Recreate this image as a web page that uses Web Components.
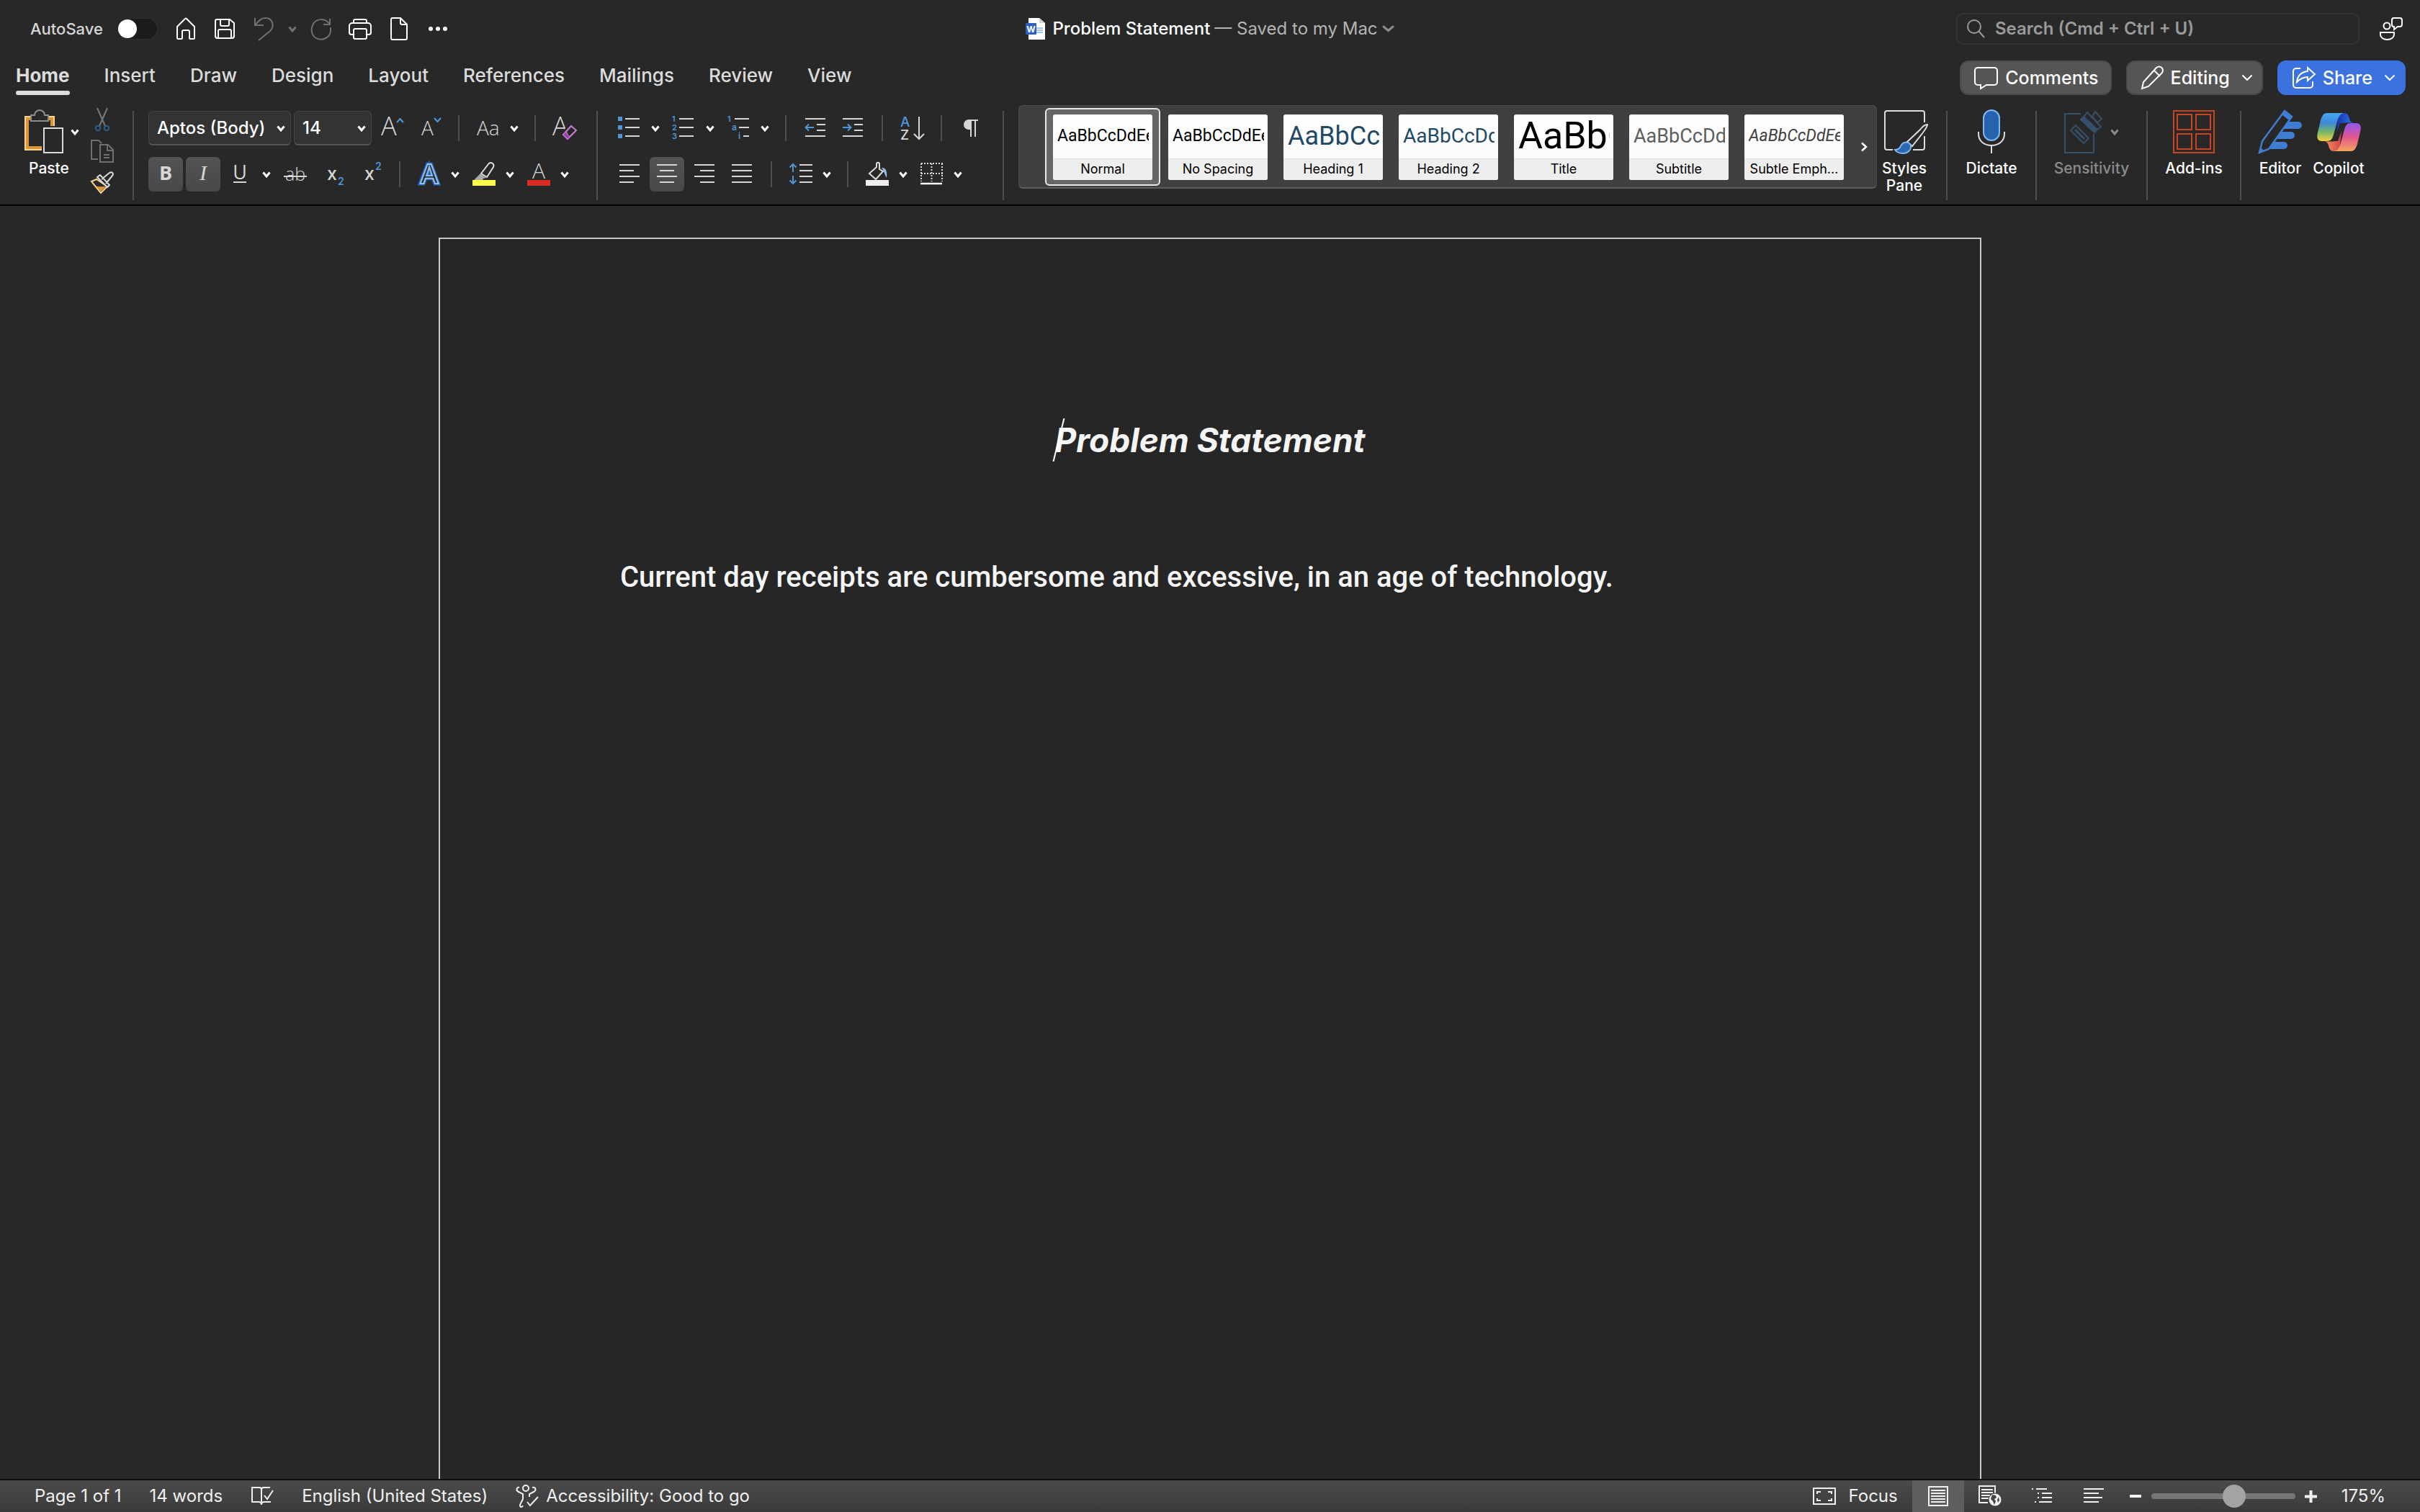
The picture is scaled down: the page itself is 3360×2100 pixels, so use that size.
<!DOCTYPE html>
<html lang="en">
<head>
<meta charset="utf-8">
<title>Problem Statement</title>
<style>
html,body{margin:0;height:100%;background:#282828}
body{font-family:Inter,"Liberation Sans",sans-serif;color:#e0e0e0;overflow:hidden}
</style>
</head>
<body>
<word-app></word-app>

<template id="t-app">
<style>
:host{display:flex;flex-direction:column;height:100vh;background:#282828}
document-canvas{flex:1;min-height:0}
</style>
<title-bar></title-bar>
<tab-strip></tab-strip>
<ribbon-bar></ribbon-bar>
<document-canvas>
  <document-heading slot="heading">Problem Statement</document-heading>
  <span slot="body">Current day receipts are cumbersome and excessive, in an age of technology.</span>
</document-canvas>
<status-bar></status-bar>
</template>

<template id="t-title">
<style>
:host{display:grid;grid-template-columns:1fr auto 1fr;align-items:center;height:80px}
button{all:unset;display:flex;align-items:center;justify-content:center;width:54px;height:44px;color:#fff}
button:disabled{color:#717171}
button.narrow{width:26px}
.left{display:flex;align-items:center;padding-left:42px}
label{font-size:22px;font-weight:500;line-height:28px;color:#d6d6d6;margin-right:20px}
.switch{appearance:none;margin:0 12px 0 0;width:56px;height:30px;border-radius:15px;background:#1b1b1b;border:1px solid #303030;box-sizing:border-box;display:flex;align-items:center}
.switch::before{content:"";width:26px;height:26px;border-radius:13px;background:#fff}
.doc{display:flex;align-items:center;font-size:24px;line-height:30px;font-weight:500;color:#fff}
.doc ui-icon:first-child{margin-right:10px}
.doc span{font-weight:400;color:#b4b4b4;margin:0 6px}
.right{display:flex;align-items:center;justify-content:flex-end;gap:28px;padding-right:24px}
.right button{width:32px}
.search{display:flex;align-items:center;gap:14px;width:560px;height:44px;box-sizing:border-box;border:2px solid #343434;border-radius:10px;padding:0 12px;color:#9a9a9a}
input[type=search]{appearance:none;flex:1;min-width:0;background:none;border:0;outline:0;padding:0;margin:0;font:600 24px/30px Inter,"Liberation Sans",sans-serif;color:#fff}
input::placeholder{color:#9a9a9a;opacity:1}
</style>
<div class="left">
<label for="as">AutoSave</label><input id="as" class="switch" type="checkbox" role="switch">
<button aria-label="Home"><ui-icon name="home"></ui-icon></button>
<button aria-label="Save"><ui-icon name="save"></ui-icon></button>
<button disabled aria-label="Undo"><ui-icon name="undo"></ui-icon></button>
<button disabled class="narrow" aria-label="Undo history"><ui-icon name="chev"></ui-icon></button>
<button disabled aria-label="Repeat"><ui-icon name="redo"></ui-icon></button>
<button aria-label="Print"><ui-icon name="print"></ui-icon></button>
<button aria-label="New document"><ui-icon name="file"></ui-icon></button>
<button aria-label="More"><ui-icon name="dots"></ui-icon></button>
</div>
<div class="doc"><ui-icon name="word"></ui-icon>Problem Statement<span>— Saved to my Mac</span><ui-icon name="chevwide" style="color:#8c8c8c"></ui-icon></div>
<div class="right">
<div class="search"><ui-icon name="search"></ui-icon><input type="search" aria-label="Search" placeholder="Search (Cmd + Ctrl + U)"></div>
<button aria-label="Presence"><ui-icon name="person"></ui-icon></button>
</div>
</template>

<template id="t-tabs">
<style>
:host{display:flex;justify-content:space-between;align-items:center;height:56px;padding:0 20px 0 22px}
nav{display:flex;gap:48px}
nav button{all:unset;font-size:26px;line-height:42px;font-weight:500;color:#dcdcdc;border-bottom:6px solid transparent}
nav button[aria-selected=true]{font-weight:700;border:0}
nav button[aria-selected=true]::after{content:"";display:block;height:6px;border-radius:3px;background:#dcdcdc}
.actions{display:flex;gap:20px}
.actions button{all:unset;display:flex;align-items:center;gap:10px;box-sizing:border-box;height:48px;padding:0 16px 0 18px;border-radius:12px;border:2px solid #4a4a4a;background:#555;color:#fff;font-size:25px;line-height:32px;font-weight:500}
.actions .menu{padding:0 12px 0 18px}
.actions .menu ui-icon:last-child{margin-left:6px}
.actions .share{background:#3b72e0;border-color:#3b72e0}
</style>
<nav role="tablist">
<button role="tab" aria-selected="true">Home</button><button role="tab">Insert</button><button role="tab">Draw</button><button role="tab">Design</button><button role="tab">Layout</button><button role="tab">References</button><button role="tab">Mailings</button><button role="tab">Review</button><button role="tab">View</button>
</nav>
<div class="actions">
<button><ui-icon name="comment"></ui-icon>Comments</button>
<button class="menu"><ui-icon name="pencil"></ui-icon>Editing<ui-icon name="chevthin"></ui-icon></button>
<button class="menu share"><ui-icon name="share"></ui-icon>Share<ui-icon name="chevthin"></ui-icon></button>
</div>
</template>

<template id="t-ribbon">
<style>
:host{display:flex;align-items:flex-start;padding:10px 78px 6px 34px;border-bottom:2px solid #000}
hr{flex:none;width:2px;height:124px;margin:8px 20px 0;border:0;background:#4f4f4f}
.clip{display:flex;gap:16px;padding:4px 0 0;margin-right:-14px}
.stack{display:flex;flex-direction:column;gap:12px;margin-right:20px}
.stack button{all:unset;display:flex;align-items:center;justify-content:center;width:32px;height:32px}
.group{display:flex;flex-direction:column;gap:16px;padding-top:8px}
.row{display:flex;gap:4px}
style-gallery{flex:1;min-width:0}
.pair{display:flex;gap:12px}
</style>
<div class="clip">
<big-tool icon="paste" split="1" style="--w:76px;--align:flex-start;--inset:6px;margin-top:0">Paste</big-tool>
<div class="stack"><button disabled aria-label="Cut"><ui-icon name="cut"></ui-icon></button><button disabled aria-label="Copy"><ui-icon name="copy"></ui-icon></button><button aria-label="Format Painter"><ui-icon name="painter"></ui-icon></button></div>
</div>
<hr>
<div class="group">
<div class="row"><combo-box style="--w:198px" label="Font" value="Aptos (Body)"></combo-box><combo-box style="--w:108px" label="Font size" value="14"></combo-box>
<tool-button icon="grow" label="Increase Font Size"></tool-button><tool-button icon="shrink" label="Decrease Font Size"></tool-button><tool-divider></tool-divider><tool-button icon="case" label="Change Case" split></tool-button><tool-divider></tool-divider><tool-button icon="clear" label="Clear Formatting"></tool-button></div>
<div class="row"><tool-button icon="bold" label="Bold" pressed></tool-button><tool-button icon="italic" label="Italic" pressed></tool-button><tool-button icon="underline" label="Underline" split></tool-button><tool-button icon="strike" label="Strikethrough"></tool-button><tool-button icon="sub" label="Subscript"></tool-button><tool-button icon="sup" label="Superscript"></tool-button><tool-divider></tool-divider><tool-button icon="effects" label="Text Effects" split></tool-button><tool-button icon="highlight" label="Highlight" split></tool-button><tool-button icon="color" label="Font Colour" split></tool-button></div>
</div>
<hr>
<div class="group">
<div class="row"><tool-button icon="bullets" label="Bullets" split></tool-button><tool-button icon="numbers" label="Numbering" split></tool-button><tool-button icon="multi" label="Multilevel List" split></tool-button><tool-divider></tool-divider><tool-button icon="outdent" label="Decrease Indent"></tool-button><tool-button icon="indent" label="Increase Indent"></tool-button><tool-divider></tool-divider><tool-button icon="sort" label="Sort"></tool-button><tool-divider></tool-divider><tool-button icon="pilcrow" label="Show Marks"></tool-button></div>
<div class="row"><tool-button icon="left" label="Align Left"></tool-button><tool-button icon="center" label="Centre" pressed></tool-button><tool-button icon="right" label="Align Right"></tool-button><tool-button icon="justify" label="Justify"></tool-button><tool-divider></tool-divider><tool-button icon="spacing" label="Line Spacing" split></tool-button><tool-divider></tool-divider><tool-button icon="shading" label="Shading" split></tool-button><tool-button icon="borders" label="Borders" split></tool-button></div>
</div>
<hr>
<style-gallery>
<style-card selected>Normal</style-card>
<style-card>No Spacing</style-card>
<style-card sample="AaBbCc" style="--s:36px;--c:#1f4a66">Heading 1</style-card>
<style-card sample="AaBbCcDd" style="--s:28px;--c:#1f4a66">Heading 2</style-card>
<style-card sample="AaBbC" style="--s:52px">Title</style-card>
<style-card sample="AaBbCcDd" style="--s:27px;--c:#5e5e5e">Subtitle</style-card>
<style-card style="--c:#404040;--fs:italic">Subtle Emph...</style-card>
</style-gallery>
<big-tool icon="styles" style="--w:76px">Styles Pane</big-tool>
<hr>
<big-tool icon="mic" style="--w:82px">Dictate</big-tool>
<hr>
<big-tool icon="sensitivity" split="1" off style="--w:112px">Sensitivity</big-tool>
<hr>
<big-tool icon="addins" style="--w:88px">Add-ins</big-tool>
<hr>
<div class="pair"><big-tool icon="editor" style="--w:68px">Editor</big-tool><big-tool icon="copilot" style="--w:70px">Copilot</big-tool></div>
</template>

<template id="t-canvas">
<style>
:host{display:flex;justify-content:center;padding:44px 0 0;overflow:hidden;box-sizing:border-box}
article{box-sizing:border-box;width:2142px;max-width:92%;padding:249px 250px 0;border:2px solid #c8c8c8;border-bottom:0;background:#262626;color:#f5f5f5}
h1{margin:0 0 131px;font-size:46px;line-height:60px;font-weight:700;font-style:italic;text-align:center}
p{margin:0;font:500 40px/60px Roboto,"Liberation Sans",sans-serif}
</style>
<article><h1><slot name="heading"></slot></h1><p><slot name="body"></slot></p></article>
</template>

<template id="t-status">
<style>
:host{display:flex;justify-content:space-between;align-items:stretch;height:44px;border-top:2px solid #0c0c0c;background:linear-gradient(#4a4a4a,#3b3b3b);font-size:24px;line-height:30px;color:#f0f0f0}
div{display:flex;align-items:center}
.left{gap:39px;padding-left:48px}
button{all:unset;display:flex;align-items:center;justify-content:center}
.acc{gap:9px}
.right{align-items:stretch;padding-right:48px}
.focus{gap:18px;margin-right:20px}
.view{width:72px}
.view[aria-pressed=true]{background:#5e5e5e}
.zoom{width:32px;margin:0 6px}
.pct{margin-left:20px}
input{appearance:none;width:200px;margin:0;background:none;align-self:center;height:32px}
input::-webkit-slider-runnable-track{height:8px;border-radius:4px;background:#757575}
input::-webkit-slider-thumb{appearance:none;width:32px;height:32px;margin-top:-12px;border-radius:16px;background:#a3a3a3}
</style>
<div class="left"><button>Page 1 of 1</button><button>14 words</button><button aria-label="Proofing"><ui-icon name="proof"></ui-icon></button><button>English (United States)</button><button class="acc"><ui-icon name="access"></ui-icon>Accessibility: Good to go</button></div>
<div class="right"><button class="focus"><ui-icon name="focus"></ui-icon>Focus</button>
<button class="view" aria-pressed="true" aria-label="Print Layout"><ui-icon name="vprint"></ui-icon></button><button class="view" aria-label="Web Layout"><ui-icon name="vweb"></ui-icon></button><button class="view" aria-label="Outline"><ui-icon name="voutline"></ui-icon></button><button class="view" aria-label="Draft"><ui-icon name="vdraft"></ui-icon></button>
<button class="zoom" aria-label="Zoom out"><ui-icon name="minus"></ui-icon></button><input type="range" aria-label="Zoom" min="0" max="100" value="59"><button class="zoom" aria-label="Zoom in"><ui-icon name="plus"></ui-icon></button><button class="pct">175%</button></div>
</template>

<script>
const B='#5097d8', G='#d6d6d6';
const lines=(a,s='currentColor')=>a.map(([x,y,x2])=>`<path d="M${x} ${y}H${x2}" stroke="${s}"/>`).join('');
const txt=(x,y,s,t,c=G,extra='')=>`<text x="${x}" y="${y}" font-size="${s}" fill="${c}" stroke="none" ${extra}>${t}</text>`;
const OS='font-family="Open Sans" font-weight="300"', MID='text-anchor="middle"';
/* name: [width, height, markup] */
const ICONS={
chev:[12,9,'<path d="M1.500 1.500 6 7 10.500 1.500" stroke-width="3"/>'],
chevthin:[16,10,'<path d="M1.500 1.500 8 8 14.500 1.500" stroke-width="2"/>'],
chevwide:[17,10,'<path d="M2 2 8.500 7.500 15 2" stroke-width="3" stroke-linecap="round"/>'],
chevright:[10,14,'<path d="M2 1.500 8 7 2 12.500" stroke-width="2.500"/>'],
home:[30,32,'<path d="M3 29V13L14 2a1.500 1.500 0 0 1 2 0L27 13v16a1 1 0 0 1-1 1h-5a1 1 0 0 1-1-1v-9a2 2 0 0 0-2-2h-6a2 2 0 0 0-2 2v9a1 1 0 0 1-1 1H4a1 1 0 0 1-1-1z"/>'],
save:[30,30,'<path d="M4 2h18l6 5v18a3 3 0 0 1-3 3H5a3 3 0 0 1-3-3V4a2 2 0 0 1 2-2zM9 2v7a2 2 0 0 0 2 2h8a2 2 0 0 0 2-2V2M6 28V18a2 2 0 0 1 2-2h14a2 2 0 0 1 2 2v10"/>'],
undo:[28,34,'<path d="M2 2v10h12M2 12C10 3 12 2 17 2c9 0 13 11 6 18L7 33"/>'],
redo:[30,32,'<path d="M27 2v8h-9M27 10C20 0 8 2 4 9S1 25 8 29s22 1 20-15"/>'],
print:[32,30,'<path d="M7 7V4a2 2 0 0 1 2-2h14a2 2 0 0 1 2 2v3M7 23H4a3 3 0 0 1-3-3v-9a4 4 0 0 1 4-4h22a4 4 0 0 1 4 4v9a3 3 0 0 1-3 3h-3M9 15h14a2 2 0 0 1 2 2v10a2 2 0 0 1-2 2H9a2 2 0 0 1-2-2V17a2 2 0 0 1 2-2z"/>'],
file:[26,34,'<path d="M4 2h11l9 9v19a2 2 0 0 1-2 2H4a2 2 0 0 1-2-2V4a2 2 0 0 1 2-2zM15 2v7a2 2 0 0 0 2 2h7"/>'],
dots:[28,8,'<g fill="currentColor" stroke="none"><circle cx="4" cy="4" r="3"/><circle cx="14" cy="4" r="3"/><circle cx="24" cy="4" r="3"/></g>'],
word:[27,30,'<path d="M4 0h15l8 7v23H4z" fill="#fff" stroke="none"/><path d="M19 0v7h8z" fill="#d0d0d0" stroke="none"/><path d="M15 14h9M15 17h9M15 20h9" stroke="#4a8ae0" stroke-width="1"/><rect x="0" y="7" width="15" height="16" rx="1" fill="#2c5fc0" stroke="none"/>'+txt(7.5,19.5,12,'W','#fff','text-anchor="middle" font-weight="700"')],
search:[26,28,'<circle cx="11" cy="11" r="9"/><path d="M17 17 25 26"/>'],
person:[32,34,'<circle cx="10" cy="13" r="4.500"/><path d="M1 22h19v3c0 4-4 7-9.500 7S1 29 1 25zM19 2h9a3 3 0 0 1 3 3v6a3 3 0 0 1-3 3h-3l-5 4v-4h-1a3 3 0 0 1-2-3V5a3 3 0 0 1 2-3z"/>'],
comment:[33,32,'<path d="M5 2h23a4 4 0 0 1 4 4v16a4 4 0 0 1-4 4H17l-8 5v-5H5a4 4 0 0 1-4-4V6a4 4 0 0 1 4-4z"/>'],
pencil:[32,34,'<path d="M2 32l2-9L22 3c5-4 11 1 8 7L11 29zM19 7l8 8"/>'],
share:[33,32,'<path d="M12 3H6a4 4 0 0 0-4 4v19a4 4 0 0 0 4 4h19a4 4 0 0 0 4-4v-5M22 2l10 9-10 9v-5c-7 0-11 3-15 7 1-9 6-14 15-15z"/>'],
paste:[54,60,'<path d="M10 12H4V52H24M32 12H38V22" stroke="#dc963c" stroke-width="4"/><path d="M10 9H1V55H24M32 9H41V22" stroke="#f6d58f"/><path d="M9 15V7h5a7 7 0 0 1 14 0h5v8z" stroke="#8e8e8e" fill="#282828"/><rect x="27" y="25" width="26" height="34" stroke="#dcdcdc"/>'],
cut:[20,32,'<path d="M3 0 14 25M17 0 6 25" stroke="#777"/><circle cx="4" cy="28" r="3.200" stroke="#2d5e8c"/><circle cx="16" cy="28" r="3.200" stroke="#2d5e8c"/>'],
copy:[32,32,'<g stroke="#6f6f6f"><path d="M10 27H1V1h10l4 4M13 7h11l7 7v17H13zM23 7v8h8M18 21h8M18 25h8"/></g>'],
painter:[32,32,'<path d="M8 11 1 14l13 16 9-9z" fill="#282828" stroke="#f6d58f"/><path d="M7 20l7 8 7-7c-5 0-10 1-14-1z" fill="#dc963c" stroke="none"/><path d="M15 11 26 2c4-2 6 1 4 4L21 17M9 8l4-3 13 14-3 3z" stroke="#dcdcdc" fill="#282828"/>'],
grow:[48,48,txt(9,34,36,'A',G,OS)+`<path d="M31 16l4.500-5 4.500 5" stroke="${B}"/>`],
shrink:[48,48,txt(13,34,28,'A',G,OS)+`<path d="M31 10l4.500 5 4.500-5" stroke="${B}"/>`],
case:[48,48,txt(8,34,28,'Aa',G,OS)],
clear:[48,48,txt(7,34,36,'A',G,OS)+'<path d="M33 20l8 7-13 13-8-7z" stroke="#282828" stroke-width="5"/><path d="M33 21l7 6-12 12-6-6z" stroke="#c77fd6"/><path d="M25 29l6 7-3 3-6-6z" fill="#9b3fae" stroke="#c77fd6" stroke-width="1"/>'],
bold:[48,48,txt(24,32,27,'B',G,MID+' font-weight="700" font-family="Open Sans"')],
italic:[48,48,txt(24,32,30,'I',G,MID+' font-style="italic" font-family="Liberation Serif"')],
underline:[48,48,txt(23,31,27,'U',G,MID+' font-weight="400" font-family="Open Sans"')+`<path d="M14 35H32" stroke="${G}"/>`],
strike:[48,48,txt(24,33,25,'ab',G,MID+' '+OS)+`<path d="M8 27H40" stroke="${G}"/>`],
sub:[48,48,txt(16,32,25,'x',G,'font-weight="500"')+txt(31,39,14,'2',B,'font-weight="600"')],
sup:[48,48,txt(16,32,25,'x',G,'font-weight="500"')+txt(31,18,14,'2',B,'font-weight="600"')],
effects:[48,48,'<text x="24" y="37" font-size="38" font-family="Open Sans" font-weight="600" text-anchor="middle" fill="#2565b8" stroke="#2565b8" stroke-width="5">A</text><text aria-hidden="true" x="24" y="37" font-size="38" font-family="Open Sans" font-weight="600" text-anchor="middle" fill="#282828" stroke="#8fc2f2" stroke-width="2">A</text>'],
highlight:[48,48,'<path d="M20 23 30 10c3-4 9-1 7 4L28 28z" stroke="#dcdcdc"/><path d="M19 23l8 6-4 1-1 2H10z" fill="#a8a8a8" stroke="none"/><rect x="8" y="32" width="32" height="8" fill="#fffb4a" stroke="none"/>'],
color:[48,48,txt(24,30,30,'A',G,MID+' '+OS)+'<rect x="8" y="32" width="32" height="8" fill="#da2c20" stroke="none"/>'],
bullets:[48,48,`<path d="M8 8h6v6H8zM8 20h6v6H8zM8 32h6v6H8z" fill="${B}" stroke="none"/>`+lines([[18,11,38],[18,23,38],[18,35,38]],G)],
numbers:[48,48,['1','2','3'].map((t,i)=>txt(7,15+i*12,11,t,B,'font-weight="600"')).join('')+lines([[17,11,37],[17,23,37],[17,35,37]],G)],
multi:[48,48,txt(8,15,11,'1',B,'font-weight="600"')+txt(14,27,12,'a',B,'font-weight="600"')+txt(23,39,12,'i',B,'font-weight="600"')+lines([[18,11,38],[24,23,38],[30,35,38]],G)],
outdent:[48,48,lines([[10,11,38],[26,19,38],[26,27,38],[10,35,38]],G)+`<path d="M22 23H11M15 18.500 10.500 23 15 27.500" stroke="${B}"/>`],
indent:[48,48,lines([[10,11,38],[26,19,38],[26,27,38],[10,35,38]],G)+`<path d="M10 23H21M17 18.500 21.500 23 17 27.500" stroke="${B}"/>`],
sort:[48,48,txt(8,22,19,'A',B,'font-weight="500"')+txt(8,40,19,'Z',G,'font-weight="500"')+`<path d="M34 8V38M27 32l7 7 7-7" stroke="${G}"/>`],
pilcrow:[48,48,`<path d="M24 12h-3a7 7 0 0 0 0 14h3z" fill="${G}" stroke="none"/><path d="M22 13H34M24 13V36M30 13V36" stroke="${G}"/>`],
left:[48,48,lines([[10,11,38],[10,19,30],[10,27,38],[10,35,30]],G)],
center:[48,48,lines([[10,11,38],[14,19,34],[10,27,38],[14,35,34]],G)],
right:[48,48,lines([[10,11,38],[18,19,38],[10,27,38],[18,35,38]],G)],
justify:[48,48,lines([[10,11,38],[10,19,38],[10,27,38],[10,35,38]],G)],
spacing:[48,48,lines([[22,11,40],[22,19,40],[22,27,40],[22,35,40]],G)+`<path d="M13 10V21M8.500 14.500 13 10l4.500 4.500M13 26V37M8.500 32.500 13 37l4.500-4.500" stroke="${B}"/>`],
shading:[48,48,'<path d="M23 14 13 23l9 8 10-11-5-3V10c0-3-4-3-4 0z" stroke="#dcdcdc"/><path d="M30 15c6 0 8 4 7 14-3-5-3-9-7-14z" fill="#8fc0ee" stroke="none"/><rect x="8" y="32" width="32" height="8" fill="#efefef" stroke="none"/>'],
borders:[48,48,'<path d="M9 9H39M9 9V34M38 9V34M9 23H39M23.500 9V34" stroke="#dcdcdc" stroke-dasharray="2 2"/><path d="M8 37H38" stroke="#fff" stroke-width="2.500"/>'],
styles:[57,60,'<path d="M56 17V4a3 3 0 0 0-3-3H4a3 3 0 0 0-3 3V52a3 3 0 0 0 3 3H12M40 55h13a3 3 0 0 0 3-3V36" stroke="#dcdcdc"/><path d="M60 20c-4 0-7 3-10 7L32 44l7 6L54 31c4-6 6-8 6-11z" stroke="#dcdcdc"/><path d="M15 55c6 0 7-3 9-7 3-5 11-4 13 1 1 6-4 11-11 11-5 0-9-2-11-5z" fill="#2a68b0" stroke="#7fb5e8"/>'],
mic:[40,62,'<rect x="9" y="1" width="22" height="42" rx="11" fill="#2563ae" stroke="#7fb8ec"/><path d="M2 31v3c0 10 8 16 18 16s18-6 18-16v-3M20 50V61" stroke="#dcdcdc"/>'],
sensitivity:[54,60,'<g stroke="#35506a"><path d="M23 5H1V59H41V33M16 21l18 18-7 7L9 28zM32 3l19 20-9 7L24 13zM43 2l9 10-6 5-7-8z"/><path d="M15 27 28 40" stroke-width="3"/><path d="M23 13l4-4 19 18-4 4z" fill="#35506a"/></g>'],
addins:[58,60,'<g stroke="#c6441f"><path d="M1 1H57V59H1zM6 6H26V27H6zM32 6H52V27H32zM6 33H26V54H6zM32 33H52V54H32z"/></g>'],
editor:[62,62,'<g fill="#3f7dd2" stroke="none"><path d="M42 17H56a5 5 0 0 1 0 10H35zM32 31H46a5 5 0 0 1 0 10H24zM22 45H36a5 5 0 0 1 0 10H14z"/></g><path d="M2 60 6 44 37 2l10 8L15 55z" fill="#282828" stroke="#3f7dd2" stroke-width="2.500"/><path d="M37 1l10 8-4 6-10-8zM1 61l2-9 6 6z" fill="#3f7dd2" stroke="none"/>'],
copilot:[61,53,'<defs><linearGradient id="a" x1="0" y1="0" x2="0" y2="1"><stop offset="0" stop-color="#47a9f0"/><stop offset=".35" stop-color="#3f87dc"/><stop offset=".65" stop-color="#6db56b"/><stop offset="1" stop-color="#f7cf3c"/></linearGradient><linearGradient id="b" x1="0" y1="0" x2="0" y2="1"><stop offset="0" stop-color="#8f56f0"/><stop offset=".5" stop-color="#e2568f"/><stop offset="1" stop-color="#f4a45c"/></linearGradient><linearGradient id="c"><stop offset="0" stop-color="#1533b4"/><stop offset="1" stop-color="#2f78e6"/></linearGradient><linearGradient id="d"><stop offset="0" stop-color="#f59a5a"/><stop offset="1" stop-color="#d83f4a"/></linearGradient></defs><g stroke="none"><path d="M30 0h8c5 0 6 4 7 8s3 5.500 7 5.500H40c-6 0-8 2.500-9 6.500l-4 9z" fill="url(#c)"/><path d="M31 53h-8c-5 0-6-4-7-8s-3-5.500-7-5.500H21c6 0 8-2.500 9-6.500l4-9z" fill="url(#d)"/><path d="M14 0H37C32 1 30 5 28 12L23 30C21 36 20 39 13 39H7C1 39-1 35 1 27L5 10C7 4 9 0 14 0z" fill="url(#a)"/><path d="M47 53H24C29 52 31 48 33 41L38 23C40 17 41 14 48 14H54C60 14 62 18 60 26L56 43C54 49 52 53 47 53z" fill="url(#b)"/><path d="M32 14H39C36 16 36 18 35 22L29 39H22C25 37 25 35 26 31z" fill="#282828"/></g>'],
proof:[32,28,'<path d="M15 22V5c0-2-1-3-3-3H2V22H11c2 0 4 1 4 4 0-3 2-4 4-4h9M15 5c0-2 1-3 3-3h9M19 13l4 5 8-12"/>'],
access:[33,32,'<circle cx="14" cy="5" r="4"/><path d="M5 4C1 3 0 8 4 10l6 3v7L6 28c0 4 3 4 4 1M23 4c5-1 6 4 2 6l-6 3v4M16 24l4 5L31 17"/>'],
focus:[32,24,'<path d="M1 1H31V23H1zM6 9V6h5M21 6h5v3M6 15v3h5M21 18h5v-3"/>'],
vprint:[28,28,'<path d="M1 1H27V27H1zM4 6H24M4 10H24M4 14H24M4 18H24M4 22H24"/>'],
vweb:[32,30,'<path d="M13 24H1V1H23V11M4 6H20M4 10H20M4 14H16M4 18H14"/><circle cx="23" cy="20" r="9" fill="#f2f2f2" stroke="#444" stroke-width="1"/><path d="M19 13l5 1 1 3-3 2 2 3-2 5-2-5-3-3zM28 16l1 5-2 3-1-4z" fill="#444" stroke="none"/>'],
voutline:[30,24,'<path d="M1 2H3M7 2H22M9 8H11M15 8H29M9 14H11M15 14H29M5 20H7M11 20H29"/>'],
vdraft:[30,24,'<path d="M1 2H29M1 8H22M1 14H27M1 20H22"/>'],
minus:[16,4,'<path d="M0 2H16" stroke-width="4"/>'],
plus:[17,17,'<path d="M0 8.500H17M8.500 0V17" stroke-width="4"/>']
};
const define=(name,build)=>customElements.define(name,class extends HTMLElement{
  connectedCallback(){ if(this.shadowRoot) return; const r=this.attachShadow({mode:'open'}); build.call(this,r); }
});
const fromTemplate=id=>function(r){ r.append(document.getElementById(id).content.cloneNode(true)); };

define('ui-icon',function(r){
  const [w,h,body]=ICONS[this.getAttribute('name')];
  r.innerHTML=`<style>:host{display:block;flex:none}svg{display:block;overflow:visible}</style><svg width="${w}" height="${h}" viewBox="0 0 ${w} ${h}" fill="none" stroke="currentColor" stroke-width="2" font-family="Inter" aria-hidden="true">${body}</svg>`;
});
define('tool-divider',function(r){
  r.innerHTML='<style>:host{display:flex;width:26px;height:48px;align-items:center;justify-content:center}i{width:2px;height:36px;background:#4f4f4f}</style><i></i>';
});
define('tool-button',function(r){
  const l=this.getAttribute('label');
  r.innerHTML=`<style>:host{display:flex;height:48px}button{all:unset;display:flex;align-items:center;justify-content:center;width:48px;height:48px;border-radius:6px;color:#fff}button.m{width:24px}:host([pressed]) button{background:linear-gradient(#535353,#484848)}</style>
  <button aria-label="${l}"><ui-icon name="${this.getAttribute('icon')}"></ui-icon></button>${this.hasAttribute('split')?`<button class="m" aria-label="${l} options"><ui-icon name="chev"></ui-icon></button>`:''}`;
});
define('combo-box',function(r){
  r.innerHTML=`<style>:host{display:grid;width:var(--w);height:48px;align-items:center;color:#fff}
  select{appearance:none;grid-area:1/1;width:100%;height:48px;margin:0;padding:0 28px 0 11px;border:1px solid #434343;border-bottom:2px solid #555;border-radius:6px;background:#333;color:#fff;font:500 24px/30px Inter,"Liberation Sans",sans-serif}
  ui-icon{grid-area:1/1;justify-self:end;margin-right:8px;pointer-events:none}</style>
  <select aria-label="${this.getAttribute('label')}"><option>${this.getAttribute('value')}</option></select><ui-icon name="chev"></ui-icon>`;
});
define('big-tool',function(r){
  r.innerHTML=`<style>:host{display:block;flex:none;width:var(--w);margin-top:4px}
  button{all:unset;display:flex;flex-direction:column;align-items:var(--align,center);width:100%;color:#fff}
  .i{display:flex;align-items:center;gap:10px;height:66px}
  span{margin:6px 0 0 var(--inset,0);font-size:21px;line-height:24px;font-weight:500;text-align:center}
  :host([off]) button{color:#8b8b8b}</style>
  <button><div class="i"><ui-icon name="${this.getAttribute('icon')}"></ui-icon>${this.hasAttribute('split')?'<ui-icon name="chev"></ui-icon>':''}</div><span><slot></slot></span></button>`;
});
define('style-gallery',function(r){
  r.innerHTML=`<style>:host{display:flex;align-items:center;box-sizing:border-box;height:116px;padding-left:36px;border:1px solid #4c4c4c;border-bottom:2px solid #5c5c5c;border-radius:6px;background:#404040}
  button{all:unset;flex:1;display:flex;align-items:center;justify-content:center;height:100px;color:#fff}</style><slot></slot><button aria-label="More styles"><ui-icon name="chevright"></ui-icon></button>`;
});
define('style-card',function(r){
  r.innerHTML=`<style>:host{display:block;flex:none}
  button{all:unset;display:block;box-sizing:border-box;width:160px;height:108px;padding:9px 11px;border-radius:6px}
  :host([selected]) button{background:#666;border:2px solid #e8e8e8;padding:7px 9px}
  .c{display:flex;flex-direction:column;height:91px;border-radius:3px;overflow:hidden;background:linear-gradient(#fff,#f8f8f8)}
  .s{flex:1;display:flex;align-items:center;margin:0 5px 0 6px;overflow:hidden;white-space:nowrap;font:var(--fs,normal) 400 var(--s,23px)/60px Roboto,"Liberation Sans",sans-serif;color:var(--c,#000)}
  .n{height:30px;border-top:1px solid #ddd;box-sizing:border-box;background:#eee;color:#000;font-size:18px;line-height:27px;text-align:center;white-space:nowrap}</style>
  <button><div class="c"><div class="s">${this.getAttribute('sample')||'AaBbCcDdEe'}</div><div class="n"><slot></slot></div></div></button>`;
});
define('document-heading',function(r){
  r.innerHTML=`<style>:host{display:inline-block;position:relative}svg{position:absolute;left:-4px;top:0}</style><slot></slot><svg width="18" height="60" aria-hidden="true"><path d="M1.500 60 16.500 0" stroke="#fff" stroke-width="2"/></svg>`;
});
define('title-bar',fromTemplate('t-title'));
define('tab-strip',fromTemplate('t-tabs'));
define('ribbon-bar',fromTemplate('t-ribbon'));
define('document-canvas',fromTemplate('t-canvas'));
define('status-bar',fromTemplate('t-status'));
define('word-app',fromTemplate('t-app'));
</script>
</body>
</html>
